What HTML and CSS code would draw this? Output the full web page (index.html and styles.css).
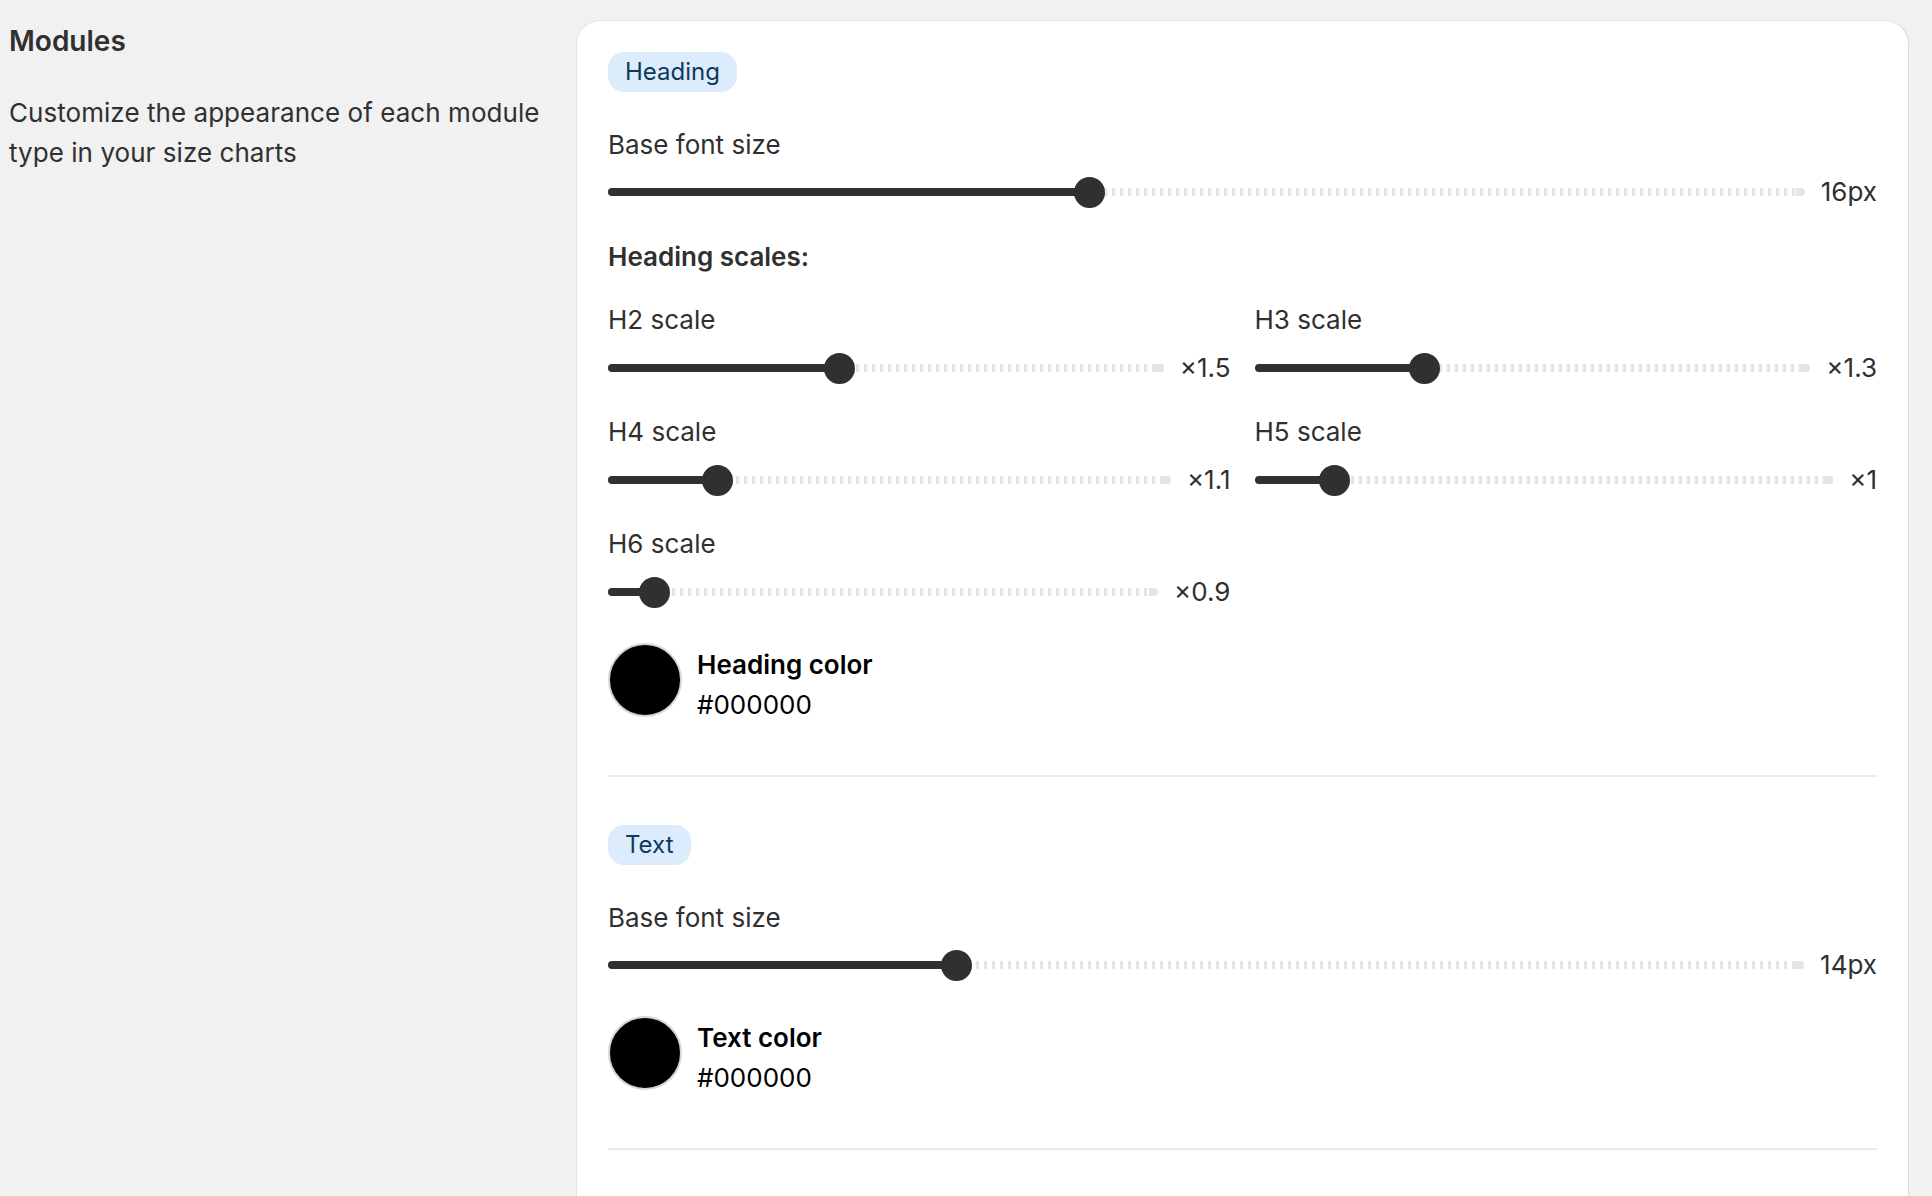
FILE: index.html
```html
<!DOCTYPE html>
<html lang="en">
<head>
<meta charset="utf-8">
<title>Modules</title>
<link rel="stylesheet" href="styles.css">
</head>
<body>
<div class="page">
  <div class="annotation">
    <h2 class="annotation-title">Modules</h2>
    <p class="annotation-desc">Customize the appearance of each module type in your size charts</p>
  </div>
  <div class="card">
    <section class="module">
      <span class="badge">Heading</span>
      <div class="field field-first">
        <div class="label">Base font size</div>
        <div class="slider">
          <div class="track" style="--p:0.4"><div class="fill"></div><div class="thumb"></div></div>
          <span class="value">16px</span>
        </div>
      </div>
      <div class="subheading">Heading scales:</div>
      <div class="scales">
        <div class="field">
          <div class="label">H2 scale</div>
          <div class="slider">
            <div class="track" style="--p:0.4118"><div class="fill"></div><div class="thumb"></div></div>
            <span class="value">×1.5</span>
          </div>
        </div>
        <div class="field">
          <div class="label">H3 scale</div>
          <div class="slider">
            <div class="track" style="--p:0.2941"><div class="fill"></div><div class="thumb"></div></div>
            <span class="value">×1.3</span>
          </div>
        </div>
        <div class="field">
          <div class="label">H4 scale</div>
          <div class="slider">
            <div class="track" style="--p:0.1765"><div class="fill"></div><div class="thumb"></div></div>
            <span class="value">×1.1</span>
          </div>
        </div>
        <div class="field">
          <div class="label">H5 scale</div>
          <div class="slider">
            <div class="track" style="--p:0.1176"><div class="fill"></div><div class="thumb"></div></div>
            <span class="value">×1</span>
          </div>
        </div>
        <div class="field">
          <div class="label">H6 scale</div>
          <div class="slider">
            <div class="track" style="--p:0.0588"><div class="fill"></div><div class="thumb"></div></div>
            <span class="value">×0.9</span>
          </div>
        </div>
      </div>
      <div class="color">
        <span class="swatch" style="background:#000000"></span>
        <div class="color-text">
          <div class="color-name">Heading color</div>
          <div class="color-hex">#000000</div>
        </div>
      </div>
    </section>
    <hr class="divider">
    <section class="module">
      <span class="badge">Text</span>
      <div class="field field-first">
        <div class="label">Base font size</div>
        <div class="slider">
          <div class="track" style="--p:0.2857"><div class="fill"></div><div class="thumb"></div></div>
          <span class="value">14px</span>
        </div>
      </div>
      <div class="color">
        <span class="swatch" style="background:#000000"></span>
        <div class="color-text">
          <div class="color-name">Text color</div>
          <div class="color-hex">#000000</div>
        </div>
      </div>
    </section>
    <hr class="divider">
    <div class="card-rest"></div>
  </div>
</div>
</body>
</html>
```

FILE: styles.css
```css
* { box-sizing: border-box; }

html, body {
  margin: 0;
  padding: 0;
  background: #f1f1f1;
}

body {
  font-family: Inter, "Noto Sans", sans-serif;
  color: #303030;
  font-size: 26px;
  line-height: 40px;
}

.page {
  display: flex;
  align-items: flex-start;
  gap: 32px;
  padding: 20px 23px 0 9px;
}

.annotation {
  width: 535px;
  flex: 0 0 535px;
  padding-top: 1px;
}

.annotation-title {
  margin: 0;
  font-size: 28px;
  line-height: 40px;
  font-weight: 600;
  color: #303030;
}

.annotation-desc {
  margin: 32px 0 0;
  font-size: 26px;
  line-height: 40px;
  letter-spacing: 0.05px;
  color: #303030;
}

.card {
  flex: 1 1 auto;
  background: #ffffff;
  border: 1px solid #e3e3e3;
  border-right-color: #dcdcdc;
  border-radius: 24px;
  padding: 31px 31px 0;
}

.module {
  display: flex;
  flex-direction: column;
}

.badge {
  align-self: flex-start;
  height: 40px;
  padding: 0 17px;
  border-radius: 16px;
  background: #dcecfc;
  color: #0d3a5c;
  font-size: 24px;
  line-height: 40px;
}

.field-first {
  margin-top: 32px;
}

.label {
  height: 40px;
  padding-top: 1px;
  line-height: 40px;
  color: #303030;
}

.slider {
  display: flex;
  align-items: center;
  gap: 16px;
  height: 40px;
  margin-top: 8px;
}

.scales .slider {
  margin-top: 9px;
}

.track {
  position: relative;
  flex: 1 1 auto;
  height: 8px;
  border-radius: 4px;
  background: repeating-linear-gradient(90deg, #e4e4e4 0 3.5px, #ffffff 3.5px 8px);
}

.track::after {
  content: "";
  position: absolute;
  right: 0;
  top: 0;
  width: 9px;
  height: 8px;
  border-radius: 0 4px 4px 0;
  background: #e4e4e4;
}

.fill {
  position: absolute;
  left: 0;
  top: 0;
  height: 8px;
  width: calc(15.5px + (100% - 31px) * var(--p));
  border-radius: 4px 0 0 4px;
  background: #303030;
  z-index: 1;
}

.thumb {
  position: absolute;
  top: 50%;
  left: calc((100% - 31px) * var(--p));
  width: 31px;
  height: 31px;
  margin-top: -15.5px;
  border-radius: 50%;
  background: #303030;
  z-index: 2;
}

.value {
  flex: 0 0 auto;
  color: #303030;
}

.subheading {
  margin-top: 24px;
  padding-top: 1px;
  height: 40px;
  font-weight: 600;
  color: #303030;
}

.scales {
  margin-top: 23px;
  display: grid;
  grid-template-columns: 1fr 1fr;
  column-gap: 24px;
  row-gap: 23px;
}

.color {
  display: flex;
  align-items: flex-start;
  gap: 15px;
  margin-top: 31px;
}

.swatch {
  flex: 0 0 74px;
  width: 74px;
  height: 74px;
  border-radius: 50%;
  border: 2px solid #d6d6d6;
}

.color-text {
  display: flex;
  flex-direction: column;
  padding-top: 2px;
  color: #000000;
}

.color-name {
  font-weight: 600;
}

.divider {
  margin: 50px 0 48px;
  border: 0;
  height: 2px;
  background: #ebebeb;
}

.card-rest {
  height: 120px;
}
```
